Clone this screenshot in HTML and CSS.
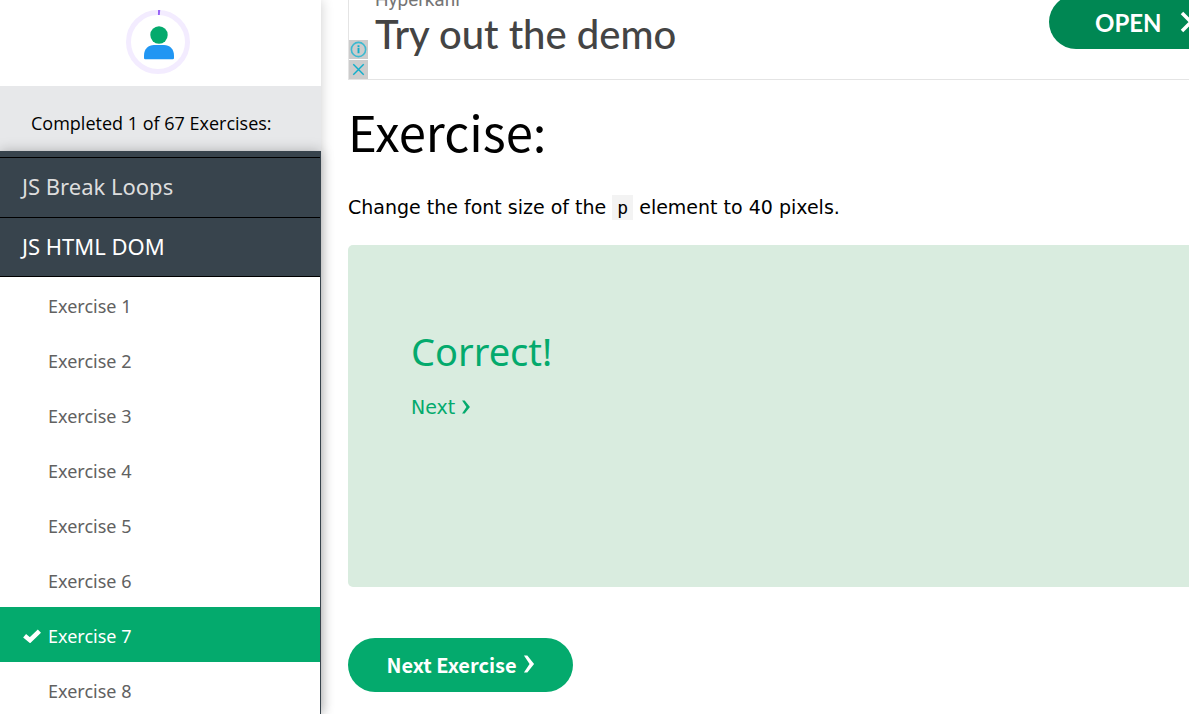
FILE: index.html
```html
<!DOCTYPE html>
<html lang="en">
<head>
<meta charset="utf-8">
<meta name="viewport" content="width=device-width, initial-scale=1">
<title>Exercise: JS HTML DOM</title>
<link rel="stylesheet" href="styles.css">
</head>
<body>
<div class="page">
  <aside class="sidebar">
    <div class="profile">
      <svg class="avatar" viewBox="0 0 64 64" aria-hidden="true">
        <circle cx="32" cy="32" r="29.5" fill="none" stroke="#f3ecff" stroke-width="5"/>
        <path d="M32 2.5A29.5 29.5 0 0 1 34 2.6" fill="none" stroke="#9763f6" stroke-width="5"/>
        <circle cx="33" cy="25" r="8.7" fill="#04aa6d"/>
        <path d="M18 48v-2.5C18 39 22.5 35 28 35H38C43.500 35 48 39 48 45.500V48Q48 49.300 46.700 49.300H19.300Q18 49.300 18 48Z" fill="#2196f3"/>
      </svg>
    </div>
    <p class="progress">Completed 1 of 67 Exercises:</p>
    <nav class="menu">
      <a class="chapter" href="#loops">JS Break Loops</a>
      <a class="chapter chapter-open" href="#dom">JS HTML DOM</a>
      <div class="lessons">
        <a class="lesson" href="#e1">Exercise 1</a>
        <a class="lesson" href="#e2">Exercise 2</a>
        <a class="lesson" href="#e3">Exercise 3</a>
        <a class="lesson" href="#e4">Exercise 4</a>
        <a class="lesson" href="#e5">Exercise 5</a>
        <a class="lesson" href="#e6">Exercise 6</a>
        <a class="lesson lesson-active" href="#e7"><svg class="check" viewBox="0 0 18 14" aria-hidden="true"><path d="M1.600 6.800 7 11.200 16.400 2.200" fill="none" stroke="#fff" stroke-width="4.600"/></svg>Exercise 7</a>
        <a class="lesson" href="#e8">Exercise 8</a>
      </div>
    </nav>
  </aside>
  <main class="content">
    <section class="ad">
      <div class="ad-badges">
        <button class="ad-badge" aria-label="Ad information"><svg viewBox="0 0 20 20"><circle cx="10" cy="10" r="7.500" fill="none" stroke="#3db9d0" stroke-width="1.700"/><path d="M10 8.500v5.500M10 5.500v2" stroke="#10aecb" stroke-width="2"/></svg></button>
        <button class="ad-badge" aria-label="Close ad"><svg viewBox="0 0 20 20"><path d="M4.500 4.500l11 11M15.500 4.500l-11 11" stroke="#10aecb" stroke-width="1.500"/></svg></button>
      </div>
      <div class="ad-text">
        <span class="ad-brand">Hyperkani</span>
        <span class="ad-title">Try out the demo</span>
      </div>
      <a class="ad-open" href="#open">OPEN<svg class="ad-arrow" viewBox="0 0 14 22" aria-hidden="true"><path d="M2 2l9 9-9 9" fill="none" stroke="#fff" stroke-width="3.500"/></svg></a>
    </section>
    <h1 class="title">Exercise:</h1>
    <p class="task">Change the font size of the <code class="code">p</code> element to 40 pixels.</p>
    <section class="result">
      <h2 class="result-title">Correct!</h2>
      <a class="result-next" href="#e8">Next<svg class="chevron" viewBox="0 0 10 16" aria-hidden="true"><path d="M.5.500H3.500L9.500 8 3.500 15.500H.5L5.500 8Z" fill="currentColor"/></svg></a>
    </section>
    <button class="next-button">Next Exercise<svg class="chevron chevron-large" viewBox="0 0 10 16" aria-hidden="true"><path d="M.5.500H3.500L9.500 8 3.500 15.500H.5L5.500 8Z" fill="currentColor"/></svg></button>
  </main>
</div>
</body>
</html>
```
FILE: styles.css
```css
* { box-sizing: border-box; }
body {
  margin: 0;
  background: #fff;
  color: #000;
  font-family: "Noto Sans", "Open Sans", sans-serif;
}
a { text-decoration: none; color: inherit; }
p, h1, h2 { margin: 0; font-weight: 400; }
button { border: 0; padding: 0; font: inherit; cursor: pointer; }

.page { display: flex; height: 100vh; overflow: hidden; }

.sidebar {
  flex: 0 0 321px;
  display: flex;
  flex-direction: column;
  box-shadow: 0 0 12px rgba(0, 0, 0, 0.2);
  z-index: 1;
}
.profile {
  flex: none;
  height: 86px;
  padding: 10px 0 0 126px;
  background: #fff;
}
.avatar { display: block; width: 64px; height: 64px; }
.progress {
  flex: none;
  height: 65px;
  padding: 10px 31px 0;
  background: #e7e8ea;
  font-family: "Open Sans", sans-serif;
  font-size: 18px;
  line-height: 54px;
}
.menu {
  flex: 1;
  min-height: 0;
  overflow: hidden;
  padding: 6px 1px 0 0;
  background: #38444d;
  box-shadow: 0 0 12px rgba(0, 0, 0, 0.25);
}
.chapter {
  display: block;
  height: 60px;
  padding-left: 22px;
  border-top: 1px solid #000;
  color: #ddd;
  font-size: 22px;
  line-height: 57px;
}
.chapter-open { border-bottom: 1px solid #000; color: #fff; }
.lessons { background: #fff; }
.lesson {
  display: flex;
  align-items: center;
  height: 55px;
  padding: 2px 0 0 48px;
  color: #616161;
  font-size: 18px;
}
.lesson-active { padding-left: 23px; background: #04aa6d; color: #fff; }
.check { width: 18px; height: 14px; margin-right: 7px; }

.content { flex: 1; min-width: 0; padding-left: 27px; }
.ad {
  display: flex;
  align-items: flex-end;
  height: 80px;
  overflow: hidden;
  border-left: 1px solid #e4e4e4;
  border-bottom: 1px solid #e4e4e4;
}
.ad-badges { display: flex; flex-direction: column; gap: 1px; }
.ad-badge { width: 19px; height: 19px; background: #ccc; }
.ad-badge svg { display: block; width: 19px; height: 19px; }
.ad-text {
  flex: 1;
  display: flex;
  flex-direction: column;
  padding: 0 0 22px 7px;
  color: #444;
}
.ad-brand {
  color: #757575;
  font-family: Roboto, sans-serif;
  font-size: 19px;
  line-height: 22px;
}
.ad-title { font-family: Lato, sans-serif; font-size: 40px; line-height: 46px; font-weight: 500; }
.ad-open {
  flex: none;
  display: flex;
  align-items: center;
  gap: 18px;
  width: 140px;
  height: 54px;
  margin-bottom: 30px;
  padding-left: 46px;
  border-radius: 27px 0 0 27px;
  background: #008753;
  color: #fff;
  font-family: Lato, sans-serif;
  font-size: 24px;
  font-weight: 700;
}
.ad-arrow { flex: none; width: 14px; height: 22px; }

.title {
  padding-top: 14px;
  font-family: "Noto Sans CJK SC", "Noto Sans", sans-serif;
  font-size: 49px;
  line-height: 74px;
}
.task {
  padding-top: 24px;
  font-family: "DejaVu Sans", sans-serif;
  font-size: 19px;
  line-height: 30px;
}
.code {
  padding: 2px 5px;
  background: #f3f3f3;
  font-family: "DejaVu Sans Mono", monospace;
  font-size: 18px;
}
.result {
  height: 342px;
  margin-top: 22px;
  padding: 78px 63px;
  border-radius: 5px 0 0 5px;
  background: #d9ecdf;
  color: #04aa6d;
}
.result-title { font-size: 38px; line-height: 56px; }
.result-next {
  display: flex;
  align-items: center;
  margin-top: 14px;
  font-family: "DejaVu Sans", sans-serif;
  font-size: 19px;
  line-height: 28px;
}
.next-button {
  display: flex;
  align-items: center;
  justify-content: center;
  width: 225px;
  height: 54px;
  margin-top: 51px;
  padding-bottom: 2px;
  border-radius: 27px;
  background: #04aa6d;
  color: #fff;
  font-family: "Noto Sans CJK SC", "Noto Sans", sans-serif;
  font-size: 20px;
  font-weight: 700;
}
.chevron { width: 10px; height: 14px; margin-left: 6px; }
.chevron-large { width: 12px; height: 18px; }
```
